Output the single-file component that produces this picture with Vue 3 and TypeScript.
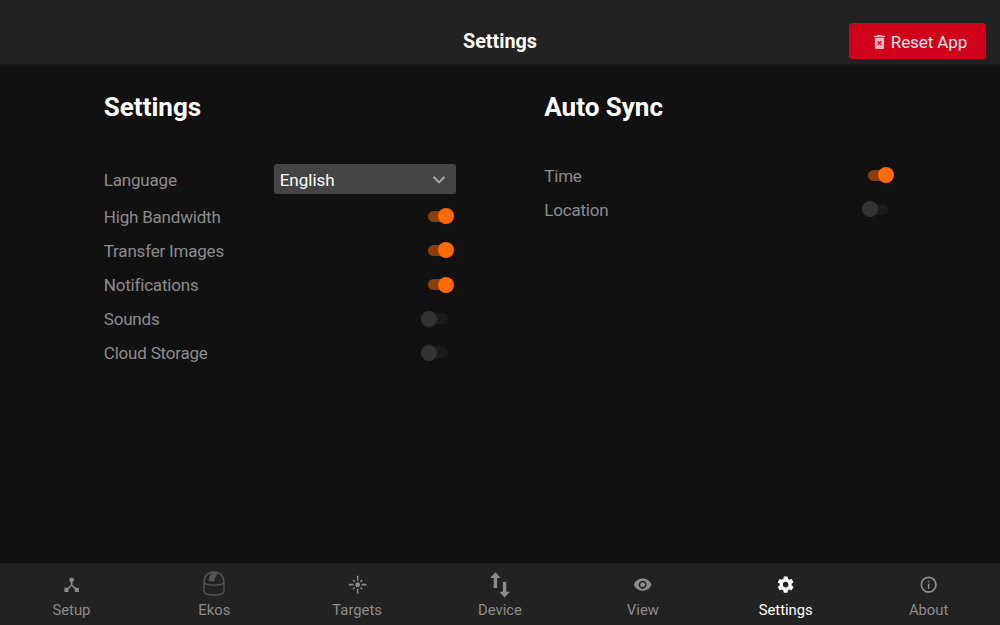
<script setup lang="ts">
import { ref } from 'vue'

interface Option { label: string; on: boolean }
interface Tab { label: string; icon: string; path?: string }

const general = ref<Option[]>([
  { label: 'High Bandwidth', on: true },
  { label: 'Transfer Images', on: true },
  { label: 'Notifications', on: true },
  { label: 'Sounds', on: false },
  { label: 'Cloud Storage', on: false },
])
const sync = ref<Option[]>([
  { label: 'Time', on: true },
  { label: 'Location', on: false },
])
const active = ref('Settings')

const tabs: Tab[] = [
  { label: 'Setup', icon: 'path', path: 'M17 16l-4-4V8.82C14.16 8.4 15 7.3 15 6c0-1.66-1.34-3-3-3S9 4.34 9 6c0 1.3.84 2.4 2 2.82V12l-4 4H3v5h5v-3.05l4-4.2 4 4.2V21h5v-5h-4z' },
  { label: 'Ekos', icon: 'dome' },
  { label: 'Targets', icon: 'path', path: 'M7 11H1v2h6v-2zm2.17-3.24L7.05 5.64 5.64 7.05l2.12 2.12 1.41-1.41zM13 1h-2v6h2V1zm5.36 6.05l-1.41-1.41-2.12 2.12 1.41 1.41 2.12-2.12zM17 11v2h6v-2h-6zm-5-2c-1.66 0-3 1.34-3 3s1.34 3 3 3 3-1.34 3-3-1.34-3-3-3zm2.83 7.24l2.12 2.12 1.41-1.41-2.12-2.12-1.41 1.41zm-9.19.71l1.41 1.41 2.12-2.12-1.41-1.41-2.12 2.12zM11 23h2v-6h-2v6z' },
  { label: 'Device', icon: 'arrows' },
  { label: 'View', icon: 'path', path: 'M12 4.5C7 4.5 2.73 7.61 1 12c1.73 4.39 6 7.5 11 7.5s9.27-3.11 11-7.5c-1.73-4.39-6-7.5-11-7.5zM12 17c-2.76 0-5-2.24-5-5s2.24-5 5-5 5 2.24 5 5-2.24 5-5 5zm0-8c-1.66 0-3 1.34-3 3s1.34 3 3 3 3-1.34 3-3-1.34-3-3-3z' },
  { label: 'Settings', icon: 'path', path: 'M19.43 12.98c.04-.32.07-.64.07-.98s-.03-.66-.07-.98l2.11-1.65c.19-.15.24-.42.12-.64l-2-3.46c-.12-.22-.39-.3-.61-.22l-2.49 1c-.52-.4-1.08-.73-1.69-.98l-.38-2.65C14.46 2.18 14.25 2 14 2h-4c-.25 0-.46.18-.49.42l-.38 2.65c-.61.25-1.17.59-1.69.98l-2.49-1c-.23-.09-.49 0-.61.22l-2 3.46c-.13.22-.07.49.12.64l2.11 1.65c-.04.32-.07.65-.07.98s.03.66.07.98l-2.11 1.65c-.19.15-.24.42-.12.64l2 3.46c.12.22.39.3.61.22l2.49-1c.52.4 1.08.73 1.69.98l.38 2.65c.03.24.24.42.49.42h4c.25 0 .46-.18.49-.42l.38-2.65c.61-.25 1.17-.59 1.69-.98l2.49 1c.23.09.49 0 .61-.22l2-3.46c.12-.22.07-.49-.12-.64l-2.11-1.65zM12 15.5c-1.93 0-3.5-1.57-3.5-3.5s1.57-3.5 3.5-3.5 3.5 1.57 3.5 3.5-1.57 3.5-3.5 3.5z' },
  { label: 'About', icon: 'path', path: 'M11 17h2v-6h-2v6zm1-15C6.48 2 2 6.48 2 12s4.48 10 10 10 10-4.48 10-10S17.52 2 12 2zm0 18c-4.41 0-8-3.59-8-8s3.59-8 8-8 8 3.59 8 8-3.59 8-8 8zM11 9h2V7h-2v2z' },
]
</script>

<template>
  <div class="app">
    <header class="header">
      <h1 class="title">Settings</h1>
      <button class="reset">
        <svg class="trash" viewBox="0 0 14 18">
          <path fill-rule="evenodd" d="M4.500 0h5l1 1H14v2H0V1h3.500zM1 4h12v12c0 1.100-.9 2-2 2H3c-1.100 0-2-.9-2-2zM4.100 8.500L6 10.500 4.100 12.500 5.200 13.600 7 11.700 8.800 13.600 9.900 12.500 8 10.500 9.900 8.500 8.800 7.400 7 9.300 5.200 7.400z" />
        </svg>
        <span>Reset App</span>
      </button>
    </header>

    <main class="main">
      <section class="panel">
        <h2 class="heading">Settings</h2>
        <div class="row language">
          <span>Language</span>
          <button class="select">
            <span>English</span>
            <svg class="chevron" viewBox="0 0 14 10"><path d="M1.500 1.800L7 7.400l5.500-5.600" /></svg>
          </button>
        </div>
        <div v-for="o in general" :key="o.label" class="row">
          <span>{{ o.label }}</span>
          <span class="switch" :class="{ on: o.on }" @click="o.on = !o.on"><i class="thumb" /></span>
        </div>
      </section>

      <section class="panel">
        <h2 class="heading">Auto Sync</h2>
        <div v-for="o in sync" :key="o.label" class="row">
          <span>{{ o.label }}</span>
          <span class="switch" :class="{ on: o.on }" @click="o.on = !o.on"><i class="thumb" /></span>
        </div>
      </section>
    </main>

    <nav class="nav">
      <a v-for="t in tabs" :key="t.label" class="tab" :class="{ active: active === t.label }" @click="active = t.label">
        <span class="icon">
          <svg v-if="t.icon === 'dome'" class="dome" viewBox="0 0 22 25">
            <path class="line" d="M1 11.500C1 5 5 1 11 1s10 4 10 10.500v9C21 22.600 16.500 24 11 24S1 22.600 1 20.500zM1 11c0 1.900 4.500 3.100 10 3.100s10-1.200 10-3.100" />
            <path class="slit" d="M9 1.300Q12 .4 15 1.700 12.300 5 11.300 10.500L5.300 10Q6 4.500 9 1.300z" />
          </svg>
          <svg v-else-if="t.icon === 'arrows'" class="arrows" viewBox="0 0 20 26">
            <path d="M5.400 .3L10.700 5.900H7.100V16H3.700V5.900H.1zM12.900 9.700h3.400v10h3.600l-5.300 5.700-5.300-5.700h3.600z" />
          </svg>
          <svg v-else class="glyph" viewBox="0 0 24 24"><path :d="t.path" /></svg>
        </span>
        <span class="tab-label">{{ t.label }}</span>
      </a>
    </nav>
  </div>
</template>

<style>
body {
  margin: 0;
  background: #111;
}
</style>

<style scoped>
.app {
  display: flex;
  flex-direction: column;
  height: 100vh;
  overflow: hidden;
  background: #111;
  color: #8c8c8c;
  font-family: Roboto, 'Liberation Sans', sans-serif;
}
button {
  border: 0;
  font-family: inherit;
}
.header {
  box-sizing: border-box;
  display: grid;
  grid-template-columns: 1fr auto 1fr;
  align-items: center;
  height: 65px;
  padding: 17px 14px 0;
  background: #222;
  border-bottom: 1px solid #1a1a1a;
}
.title {
  grid-column: 2;
  margin: 0;
  padding-top: 2px;
  color: #fff;
  font-size: 19.8px;
  font-weight: 700;
  line-height: 24px;
}
.reset {
  justify-self: end;
  display: flex;
  align-items: center;
  justify-content: center;
  gap: 6px;
  box-sizing: border-box;
  width: 137px;
  height: 36px;
  padding: 2px 0 0 6px;
  border-radius: 3px;
  background: #d0021b;
  color: #fbe3e6;
  font-size: 17px;
  letter-spacing: -0.1px;
}
.trash {
  width: 11px;
  height: 14px;
  fill: #f9b4bd;
}
.main {
  flex: 1;
  display: flex;
  gap: 88.600px;
  padding: 24px 103.800px 0;
}
.panel {
  width: 351.900px;
}
.heading {
  margin: 0 0 33.200px;
  color: #fff;
  font-size: 26px;
  font-weight: 700;
  line-height: 36px;
}
.row {
  display: flex;
  align-items: center;
  justify-content: space-between;
  height: 34.200px;
  font-size: 17px;
  letter-spacing: -0.2px;
}
.row > span:first-child {
  padding-top: 1px;
}
.language {
  align-items: flex-start;
  height: 30px;
  margin: 5.300px 0;
  line-height: 30px;
}
.select {
  display: flex;
  align-items: center;
  justify-content: space-between;
  box-sizing: border-box;
  width: 182px;
  height: 30px;
  padding: 2px 10px 0 6px;
  border-radius: 3px;
  background: #444;
  color: #fff;
  font-size: 17px;
}
.heading + .language {
  margin-top: 38.800px;
}
.chevron {
  width: 14px;
  height: 10px;
  fill: none;
  stroke: #aaa;
  stroke-width: 2;
}
.switch {
  display: flex;
  align-items: center;
  width: 20px;
  height: 11px;
  margin-right: 8px;
  border-radius: 6px;
  background: #1b1b1b;
}
.thumb {
  flex: none;
  width: 16px;
  height: 16px;
  margin-left: -6.500px;
  border-radius: 50%;
  background: #333;
}
.switch.on {
  justify-content: flex-end;
  background: #8a3e0a;
}
.on .thumb {
  margin: 0 -6px 0 0;
  background: #ff6a00;
}
.nav {
  display: flex;
  box-sizing: border-box;
  height: 63px;
  border-top: 1px solid #080808;
  background: #222;
}
.tab {
  flex: 1;
  display: flex;
  flex-direction: column;
  align-items: center;
}
.icon {
  display: flex;
  align-items: center;
  justify-content: center;
  height: 44px;
}
.glyph {
  width: 19.300px;
  height: 19.300px;
  fill: currentColor;
}
.arrows {
  width: 20px;
  height: 26px;
  fill: currentColor;
}
.dome {
  width: 22px;
  height: 25px;
  margin-bottom: 3px;
}
.line {
  fill: none;
  stroke: #555;
  stroke-width: 1.3;
}
.slit {
  fill: #555;
}
.tab-label {
  margin-top: -6px;
  font-size: 14.8px;
  line-height: 18px;
}
.tab.active {
  color: #fff;
}
</style>
